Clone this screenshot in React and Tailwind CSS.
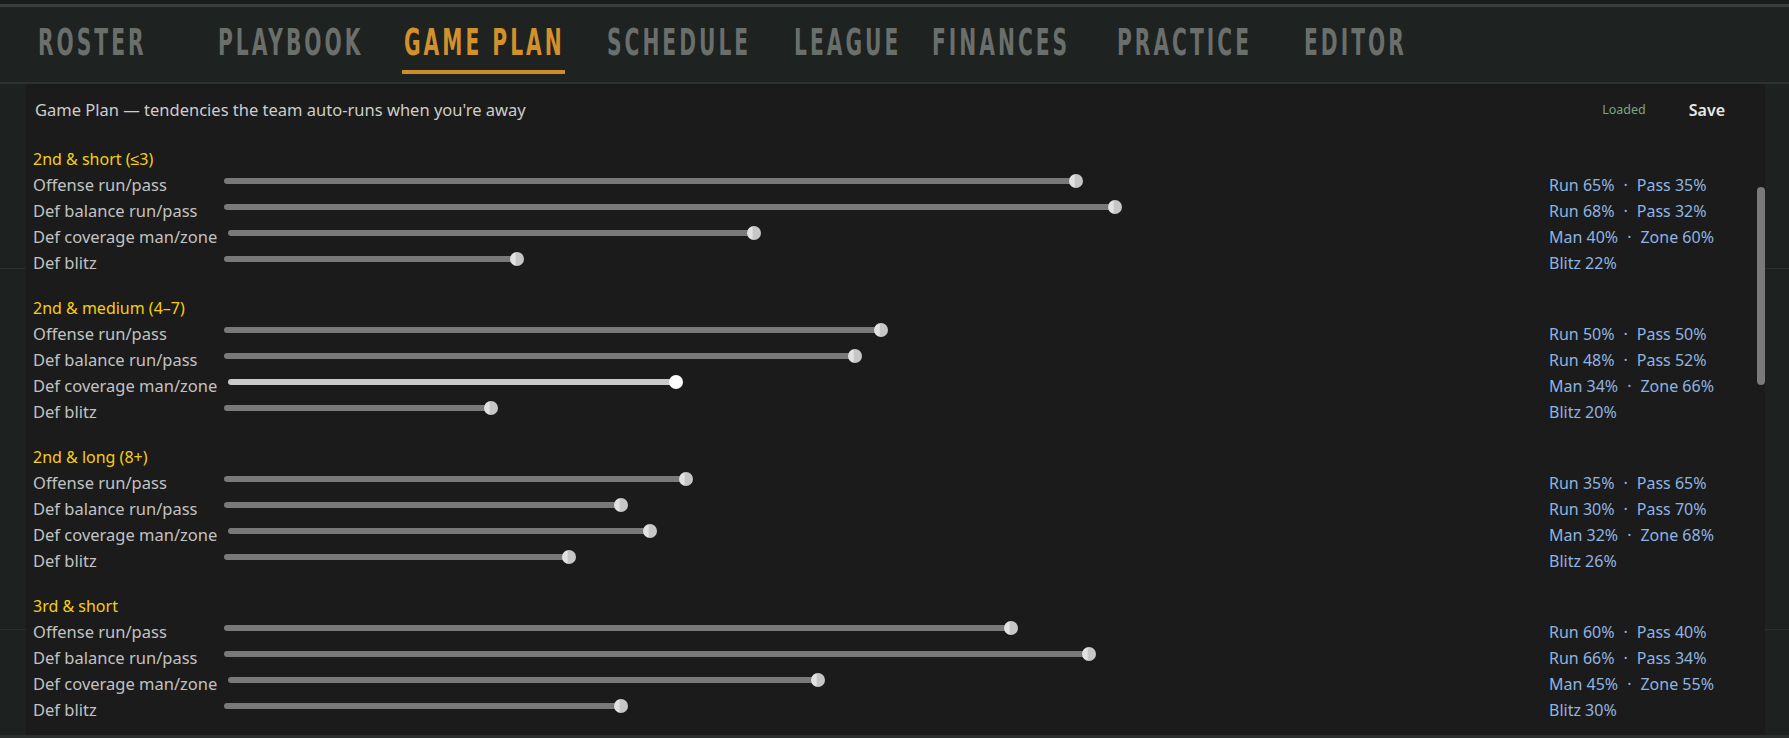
import React from 'react';

const tabs = [
  { name: 'ROSTER', w: 'w-[180px]' },
  { name: 'PLAYBOOK', w: 'w-[186px]' },
  { name: 'GAME PLAN', w: 'w-[203px]', active: true },
  { name: 'SCHEDULE', w: 'w-[187px]' },
  { name: 'LEAGUE', w: 'w-[138px]' },
  { name: 'FINANCES', w: 'w-[185px]' },
  { name: 'PRACTICE', w: 'w-[187px]' },
  { name: 'EDITOR', w: 'w-[120px]' },
];

const mix = (a, b, v) => [`${a} ${v}%`, `${b} ${100 - v}%`];

const sections = [
  { title: '2nd & short (≤3)', rows: [['Offense run/pass', 65, mix('Run', 'Pass', 65)], ['Def balance run/pass', 68, mix('Run', 'Pass', 68)], ['Def coverage man/zone', 40, mix('Man', 'Zone', 40)], ['Def blitz', 22, [`Blitz 22%`]]] },
  { title: '2nd & medium (4–7)', rows: [['Offense run/pass', 50, mix('Run', 'Pass', 50)], ['Def balance run/pass', 48, mix('Run', 'Pass', 48)], ['Def coverage man/zone', 34, mix('Man', 'Zone', 34), true], ['Def blitz', 20, [`Blitz 20%`]]] },
  { title: '2nd & long (8+)', rows: [['Offense run/pass', 35, mix('Run', 'Pass', 35)], ['Def balance run/pass', 30, mix('Run', 'Pass', 30)], ['Def coverage man/zone', 32, mix('Man', 'Zone', 32)], ['Def blitz', 26, [`Blitz 26%`]]] },
  { title: '3rd & short', rows: [['Offense run/pass', 60, mix('Run', 'Pass', 60)], ['Def balance run/pass', 66, mix('Run', 'Pass', 66)], ['Def coverage man/zone', 45, mix('Man', 'Zone', 45)], ['Def blitz', 30, [`Blitz 30%`]]] },
];

// range slider: only the filled part of the track is drawn, the thumb sits at the value
function Slider({ value, hot }) {
  const f = value / 100;
  return (
    <div className="relative h-[26px] flex-1 min-w-0">
      <div
        className={`absolute left-0 top-[6px] h-[6px] rounded-full ${hot ? 'bg-[#c9c9c9]' : 'bg-[#797979]'}`}
        style={{ width: `calc(${f} * (100% - 14px) + 8px)` }}
      />
      <div
        className={`absolute top-[2px] h-[14px] w-[14px] rounded-full ${hot ? 'bg-white' : 'bg-[linear-gradient(90deg,#e2e2e2_0%,#e2e2e2_38%,#c6c6c6_42%,#c6c6c6_100%)]'}`}
        style={{ left: `calc(${f} * (100% - 14px))` }}
      />
    </div>
  );
}

function Gutter({ w }) {
  return (
    <div className={`${w} shrink-0 flex flex-col`}>
      <div className="h-[185px] border-b border-[#2a2f2d]" />
      <div className="h-[361px] border-b border-[#2a2f2d]" />
    </div>
  );
}

function App() {
  return (
    <div className="h-[738px] w-[1789px] overflow-hidden bg-[#1d2120] flex flex-col font-['Noto_Sans',sans-serif]">
      {/* top nav */}
      <div className="h-[4px] bg-[#1a1d1c]" />
      <div className="h-[3px] bg-[#383f3c]" />
      <div className="h-[75px] bg-[#1e2221] flex items-start pl-[38px] pt-[24px]">
        {tabs.map((t) => (
          <div key={t.name} className={`${t.w} shrink-0`}>
            <div className="inline-flex flex-col">
              <span
                className={`block h-[22px] leading-[22px] text-[22.5px] font-bold tracking-[3px] scale-y-[1.68] font-['DejaVu_Sans_Condensed','DejaVu_Sans',sans-serif] ${t.active ? 'text-[#d3912c]' : 'text-[#6a6f6c]'}`}
              >
                {t.name}
              </span>
              <div className={`mt-[17px] h-[4px] -ml-[2px] ${t.active ? 'bg-[#cf8c2a]' : ''}`} />
            </div>
          </div>
        ))}
      </div>
      <div className="h-[2px] bg-[#2c3230]" />

      {/* body */}
      <div className="flex h-[651px]">
        <Gutter w="w-[26px]" />
        <div className="w-[1739px] shrink-0 bg-[#1b1b1b] flex flex-col">
          <div className="h-[52px] flex items-center pl-[9px] pr-[28px]">
            <span className="text-[16.5px] text-[#cdcdcd]">Game Plan — tendencies the team auto-runs when you're away</span>
            <span className="ml-auto text-[12.5px] text-[#7fa57f]">Loaded</span>
            <button className="ml-[31px] px-3 text-[16px] font-semibold text-[#e8e8e8]">Save</button>
          </div>
          <div className="flex flex-1 min-h-0">
            <div className="flex-1 pl-[7px] pt-[10px] flex flex-col gap-[19px]">
              {sections.map((s) => (
                <div key={s.title} className="flex flex-col">
                  <div className="h-[26px] leading-[26px] text-[16px] text-[#f6cf0c]">{s.title}</div>
                  {s.rows.map(([label, v, parts, hot]) => (
                    <div key={label} className="h-[26px] flex items-center">
                      <span className="min-w-[180px] text-[16.5px] leading-[26px] text-[#c2c2c2] whitespace-nowrap">{label}</span>
                      <div className="ml-[11px] flex-1 flex min-w-0">
                        <Slider value={v} hot={hot} />
                      </div>
                      <span className="ml-[11px] w-[208px] shrink-0 text-[16px] leading-[26px] text-[#8fb4e2] whitespace-nowrap">
                        {parts[0]}
                        {parts[1] && (
                          <>
                            <span className="px-[9px]">·</span>
                            {parts[1]}
                          </>
                        )}
                      </span>
                    </div>
                  ))}
                </div>
              ))}
            </div>
            <div className="w-[8px] shrink-0">
              <div className="mt-[51px] h-[198px] w-[8px] rounded-full bg-[#7a7a7a]" />
            </div>
          </div>
        </div>
        <Gutter w="w-[24px]" />
      </div>
      <div className="h-[3px] bg-[#2b302e]" />
    </div>
  );
}

export default App;
